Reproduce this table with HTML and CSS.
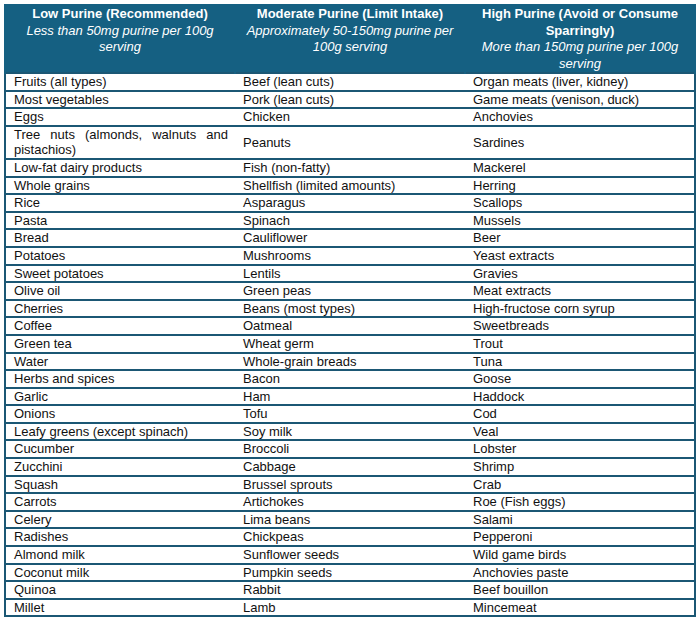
FILE: index.html
```html
<!DOCTYPE html>
<html lang="en">
<head>
<meta charset="utf-8">
<title>Purine Food Table</title>
<link rel="stylesheet" href="styles.css">
</head>
<body>
<table class="purine">
  <colgroup><col class="c"><col class="c"><col class="c"></colgroup>
  <thead>
    <tr>
      <th><span class="title">Low Purine (Recommended)</span><span class="sub">Less than 50mg purine per 100g serving</span></th>
      <th><span class="title">Moderate Purine (Limit Intake)</span><span class="sub">Approximately 50-150mg purine per 100g serving</span></th>
      <th><span class="title">High Purine (Avoid or Consume Sparringly)</span><span class="sub">More than 150mg purine per 100g serving</span></th>
    </tr>
  </thead>
  <tbody>
    <tr><td>Fruits (all types)</td><td>Beef (lean cuts)</td><td>Organ meats (liver, kidney)</td></tr>
    <tr><td>Most vegetables</td><td>Pork (lean cuts)</td><td>Game meats (venison, duck)</td></tr>
    <tr><td>Eggs</td><td>Chicken</td><td>Anchovies</td></tr>
    <tr class="double"><td>Tree nuts (almonds, walnuts and pistachios)</td><td>Peanuts</td><td>Sardines</td></tr>
    <tr><td>Low-fat dairy products</td><td>Fish (non-fatty)</td><td>Mackerel</td></tr>
    <tr><td>Whole grains</td><td>Shellfish (limited amounts)</td><td>Herring</td></tr>
    <tr><td>Rice</td><td>Asparagus</td><td>Scallops</td></tr>
    <tr><td>Pasta</td><td>Spinach</td><td>Mussels</td></tr>
    <tr><td>Bread</td><td>Cauliflower</td><td>Beer</td></tr>
    <tr><td>Potatoes</td><td>Mushrooms</td><td>Yeast extracts</td></tr>
    <tr><td>Sweet potatoes</td><td>Lentils</td><td>Gravies</td></tr>
    <tr><td>Olive oil</td><td>Green peas</td><td>Meat extracts</td></tr>
    <tr><td>Cherries</td><td>Beans (most types)</td><td>High-fructose corn syrup</td></tr>
    <tr><td>Coffee</td><td>Oatmeal</td><td>Sweetbreads</td></tr>
    <tr><td>Green tea</td><td>Wheat germ</td><td>Trout</td></tr>
    <tr><td>Water</td><td>Whole-grain breads</td><td>Tuna</td></tr>
    <tr><td>Herbs and spices</td><td>Bacon</td><td>Goose</td></tr>
    <tr><td>Garlic</td><td>Ham</td><td>Haddock</td></tr>
    <tr><td>Onions</td><td>Tofu</td><td>Cod</td></tr>
    <tr><td>Leafy greens (except spinach)</td><td>Soy milk</td><td>Veal</td></tr>
    <tr><td>Cucumber</td><td>Broccoli</td><td>Lobster</td></tr>
    <tr><td>Zucchini</td><td>Cabbage</td><td>Shrimp</td></tr>
    <tr><td>Squash</td><td>Brussel sprouts</td><td>Crab</td></tr>
    <tr><td>Carrots</td><td>Artichokes</td><td>Roe (Fish eggs)</td></tr>
    <tr><td>Celery</td><td>Lima beans</td><td>Salami</td></tr>
    <tr><td>Radishes</td><td>Chickpeas</td><td>Pepperoni</td></tr>
    <tr><td>Almond milk</td><td>Sunflower seeds</td><td>Wild game birds</td></tr>
    <tr><td>Coconut milk</td><td>Pumpkin seeds</td><td>Anchovies paste</td></tr>
    <tr><td>Quinoa</td><td>Rabbit</td><td>Beef bouillon</td></tr>
    <tr><td>Millet</td><td>Lamb</td><td>Mincemeat</td></tr>
  </tbody>
</table>
</body>
</html>
```
FILE: styles.css
```css
html, body {
  margin: 0;
  padding: 0;
  background: #ffffff;
}

body {
  padding: 4px 0 0 4px;
  font-family: "Liberation Sans", Arial, sans-serif;
  font-size: 13px;
  color: #111111;
}

.purine {
  width: 690px;
  table-layout: fixed;
  border-collapse: collapse;
}

.purine .c {
  width: 230px;
}

.purine th {
  background: #156082;
  color: #ffffff;
  vertical-align: top;
  text-align: center;
  padding: 0 8px 0 8px;
  line-height: 16.5px;
  font-weight: normal;
  border-top: 2px solid #156082;
  border-left: 2px solid #156082;
  border-right: 2px solid #156082;
}

.purine th .title {
  display: block;
  font-weight: bold;
}

.purine th .sub {
  display: block;
  font-style: italic;
}

.purine td {
  padding: 0 7px 0 8px;
  line-height: 15.6px;
  vertical-align: middle;
  text-align: justify;
  border-top: 2px solid #1b5774;
  border-bottom: 2px solid #1b5774;
}

.purine td:first-child {
  border-left: 2px solid #1b5774;
}

.purine td:last-child {
  border-right: 2px solid #1b5774;
}
```
